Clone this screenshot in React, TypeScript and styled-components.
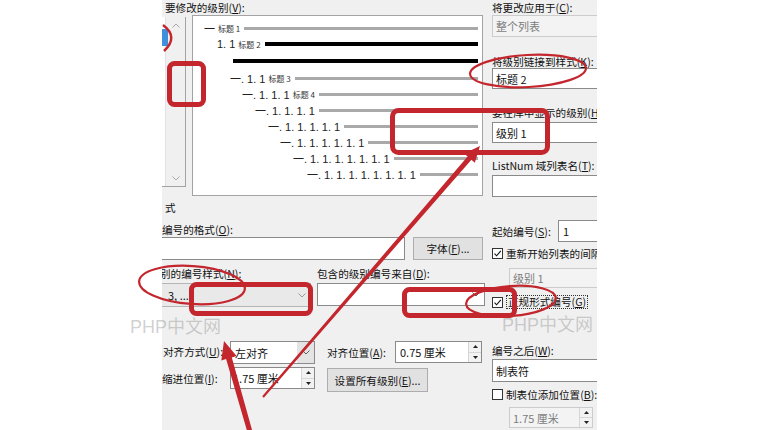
import React from 'react';
import styled, { createGlobalStyle } from 'styled-components';

const GlobalStyle = createGlobalStyle`
  html, body { margin: 0; padding: 0; background: #fff; }
  body { font-family: "Noto Sans CJK SC", "Noto Sans", sans-serif; }
`;

const RED = '#c3262d';

const Page = styled.div`
  position: relative;
  width: 760px;
  height: 430px;
  overflow: hidden;
  background: #fff;
  font-family: "Noto Sans CJK SC", "Liberation Sans", sans-serif;
  font-size: 10.6px;
  color: #111;
`;

const Dialog = styled.div`
  margin-left: 162px;
  width: 435px;
  height: 430px;
  box-sizing: border-box;
  padding-left: 3px;
  background: #f0f0f0;
  overflow: hidden;
  display: grid;
  grid-template-columns: 321px 105px;
  grid-template-rows: 200px 135px 95px;
  column-gap: 6px;
`;

const Cell = styled.div`
  display: flex;
  flex-direction: column;
  min-width: 0;
`;

const Label = styled.div<{ $mt?: number; $w?: number; $cut?: number; $ml?: number }>`
  flex: none;
  height: 13px;
  line-height: 13px;
  margin-top: ${(p) => p.$mt ?? 0}px;
  margin-left: ${(p) => p.$ml ?? 0}px;
  width: ${(p) => (p.$w ? `${p.$w}px` : 'auto')};
  text-indent: ${(p) => -(p.$cut ?? 0)}px;
  white-space: nowrap;
  u { text-decoration: underline; }
`;

const Row = styled.div<{ $mt?: number; $align?: string }>`
  display: flex;
  align-items: ${(p) => p.$align ?? 'flex-start'};
  margin-top: ${(p) => p.$mt ?? 0}px;
`;

const Col = styled.div<{ $w: number; $ml?: number }>`
  display: flex;
  flex-direction: column;
  width: ${(p) => p.$w}px;
  margin-left: ${(p) => p.$ml ?? 0}px;
`;

/* ---------- level list + preview ---------- */

const ListBox = styled.div`
  flex: none;
  display: flex;
  width: 24px;
  height: 170px;
  margin-left: -3px;
  margin-top: 2px;
  box-sizing: border-box;
  border-right: 1px solid #a3a3a3;
  border-bottom: 1px solid #a3a3a3;
`;

const ListItems = styled.div`
  width: 3px;
  background: #fff;
`;

const ScrollTrack = styled.div`
  flex: 1;
  display: flex;
  flex-direction: column;
  justify-content: space-between;
  align-items: center;
  padding: 6px 0 5px;
  background: #f0f0f0;
  border-left: 1px solid #e2e2e2;
`;

const Preview = styled.div`
  flex: none;
  width: 291px;
  height: 181px;
  margin-left: 6px;
  box-sizing: border-box;
  padding: 4px 4px 0 0;
  background: #fff;
  border: 1px solid #a3a3a3;
`;

const PreviewRow = styled.div<{ $indent: number; $h: number }>`
  display: flex;
  align-items: center;
  height: ${(p) => p.$h}px;
  padding-left: ${(p) => p.$indent}px;
`;

const Num = styled.span`
  font-family: "Liberation Sans", "Noto Sans CJK SC", sans-serif;
  font-size: 11px;
  white-space: pre;
  color: #222;
`;

const Caption = styled.span`
  font-size: 8px;
  margin-left: 3px;
  white-space: pre;
  color: #333;
`;

const Bar = styled.span<{ $dark?: boolean; $flush?: boolean }>`
  flex: 1;
  margin-left: ${(p) => (p.$flush ? 0 : 4)}px;
  height: ${(p) => (p.$dark ? 4 : 3)}px;
  background: ${(p) => (p.$dark ? '#000' : '#a9a9a9')};
`;

/* ---------- form controls ---------- */

type Tone = 'white' | 'gray' | 'disabled';

const Field = styled.div<{ $w?: number; $h: number; $mt?: number; $ml?: number; $pl?: number; $tone?: Tone }>`
  flex: none;
  display: flex;
  align-items: center;
  box-sizing: border-box;
  width: ${(p) => (p.$w ? `${p.$w}px` : 'calc(100% + 30px)')};
  height: ${(p) => p.$h}px;
  margin-top: ${(p) => p.$mt ?? 0}px;
  margin-left: ${(p) => p.$ml ?? 0}px;
  padding-left: ${(p) => p.$pl ?? 3}px;
  border: 1px solid
    ${(p) => (p.$tone === 'disabled' ? '#cccccc' : p.$tone === 'gray' ? '#b5b5b5' : '#8a8a8a')};
  background: ${(p) => (p.$tone === 'disabled' ? '#f3f3f3' : p.$tone === 'gray' ? '#e9e9e9' : '#fff')};
  color: ${(p) => (p.$tone === 'disabled' ? '#7d7d7d' : '#111')};
  font-size: 11px;
  white-space: nowrap;
  overflow: hidden;
`;

const FieldText = styled.span`
  flex: 1;
  overflow: hidden;
`;

const DropButton = styled.span<{ $shade?: boolean }>`
  flex: none;
  align-self: stretch;
  width: 17px;
  display: flex;
  align-items: center;
  justify-content: center;
  background: ${(p) => (p.$shade ? '#e4e4e4' : 'transparent')};
`;

const Spinner = styled.span`
  flex: none;
  align-self: stretch;
  width: 12px;
  display: flex;
  flex-direction: column;
  border-left: 1px solid #d6d6d6;
`;

const SpinHalf = styled.span`
  flex: 1;
  display: flex;
  align-items: center;
  justify-content: center;
  background: #f2f2f2;
  & + & { border-top: 1px solid #d6d6d6; }
`;

const PushButton = styled.div<{ $w: number; $h: number; $mt?: number; $ml?: number }>`
  flex: none;
  display: flex;
  align-items: center;
  justify-content: center;
  box-sizing: border-box;
  width: ${(p) => p.$w}px;
  height: ${(p) => p.$h}px;
  margin-top: ${(p) => p.$mt ?? 0}px;
  margin-left: ${(p) => p.$ml ?? 0}px;
  background: #e1e1e1;
  border: 1px solid #adadad;
  white-space: nowrap;
  u { text-decoration: underline; }
`;

const CheckRow = styled.div<{ $mt?: number; $h?: number }>`
  display: flex;
  align-items: center;
  gap: 3px;
  height: ${(p) => p.$h ?? 13}px;
  margin-top: ${(p) => p.$mt ?? 0}px;
  white-space: nowrap;
  u { text-decoration: underline; }
`;

const CheckBox = styled.span`
  flex: none;
  width: 11px;
  height: 11px;
  box-sizing: border-box;
  border: 1px solid #333;
  background: #fff;
  display: flex;
  align-items: center;
  justify-content: center;
`;

const FocusText = styled.span`
  border: 1px dotted #333;
  padding: 0 1px;
  line-height: 12px;
`;

/* ---------- overlays ---------- */

const Watermark = styled.div<{ $x: number; $y: number }>`
  position: absolute;
  left: ${(p) => p.$x}px;
  top: ${(p) => p.$y}px;
  font-family: "Liberation Sans", "Noto Sans CJK SC", sans-serif;
  font-size: 18px;
  line-height: 24px;
  color: rgba(150, 150, 150, 0.45);
  white-space: nowrap;
  pointer-events: none;
`;

const Overlay = styled.svg`
  position: absolute;
  left: 0;
  top: 0;
  pointer-events: none;
`;

const Chevron = ({ color = '#606060' }: { color?: string }) => (
  <svg width="8" height="5" viewBox="0 0 8 5">
    <path d="M0.5 0.5 L4 4 L7.5 0.5" fill="none" stroke={color} strokeWidth="1" />
  </svg>
);

const ChevronUp = () => (
  <svg width="8" height="5" viewBox="0 0 8 5">
    <path d="M0.5 4.5 L4 1 L7.5 4.5" fill="none" stroke="#a8a8a8" strokeWidth="1" />
  </svg>
);

const Tri = ({ up }: { up?: boolean }) => (
  <svg width="5" height="3" viewBox="0 0 5 3">
    <path d={up ? 'M0 3 L2.5 0 L5 3 Z' : 'M0 0 L2.5 3 L5 0 Z'} fill="#222" />
  </svg>
);

const Tick = () => (
  <svg width="9" height="9" viewBox="0 0 9 9">
    <path d="M1.5 4.6 L3.6 6.8 L7.8 1.8" fill="none" stroke="#111" strokeWidth="1.1" />
  </svg>
);

const Spin = () => (
  <Spinner>
    <SpinHalf><Tri up /></SpinHalf>
    <SpinHalf><Tri /></SpinHalf>
  </Spinner>
);

type Level = { num?: string; caption?: string; indent: number; h: number; dark?: boolean };

const levels: Level[] = [
  { num: '一', caption: '标题 1', indent: 11, h: 16 },
  { num: '1. 1', caption: '标题 2', indent: 24, h: 16, dark: true },
  { indent: 40, h: 18, dark: true },
  { num: '一. 1. 1', caption: '标题 3', indent: 37, h: 16 },
  { num: '一. 1. 1. 1', caption: '标题 4', indent: 49, h: 16 },
  { num: '一. 1. 1. 1. 1', indent: 62, h: 16 },
  { num: '一. 1. 1. 1. 1. 1', indent: 75, h: 16 },
  { num: '一. 1. 1. 1. 1. 1. 1', indent: 87, h: 16 },
  { num: '一. 1. 1. 1. 1. 1. 1. 1', indent: 100, h: 16 },
  { num: '一. 1. 1. 1. 1. 1. 1. 1. 1', indent: 114, h: 16 },
];

// tapered arrow polygon from tail to tip
const arrow = (tx: number, ty: number, px: number, py: number, tailW: number, bodyW: number, headL: number, headW: number) => {
  const dx = px - tx;
  const dy = py - ty;
  const len = Math.hypot(dx, dy);
  const ux = dx / len;
  const uy = dy / len;
  const nx = -uy;
  const ny = ux;
  const bx = px - ux * headL;
  const by = py - uy * headL;
  const pts = [
    [tx + nx * tailW, ty + ny * tailW],
    [bx + nx * bodyW, by + ny * bodyW],
    [bx + nx * headW, by + ny * headW],
    [px, py],
    [bx - nx * headW, by - ny * headW],
    [bx - nx * bodyW, by - ny * bodyW],
    [tx - nx * tailW, ty - ny * tailW],
  ];
  return pts.map((p) => `${p[0].toFixed(1)},${p[1].toFixed(1)}`).join(' ');
};

const Annotations = () => (
  <Overlay width="760" height="430" viewBox="0 0 760 430">
    <rect x="162" y="29" width="6" height="17" fill="#3f8fdc" />
    <path d="M163 25 Q179 37 164 51" fill="none" stroke={RED} strokeWidth="2.5" />
    <rect x="169.5" y="63.5" width="34" height="41" rx="5" fill="none" stroke={RED} strokeWidth="5" />
    <ellipse cx="528" cy="71" rx="58" ry="16" transform="rotate(-3 528 71)" fill="none" stroke={RED} strokeWidth="2.2" />
    <rect x="392.5" y="110.5" width="155" height="42" rx="6" fill="none" stroke={RED} strokeWidth="5" />
    <ellipse cx="192" cy="285" rx="53" ry="19" transform="rotate(4 192 285)" fill="none" stroke={RED} strokeWidth="2.2" />
    <rect x="191.5" y="284.5" width="119" height="29" rx="5" fill="none" stroke={RED} strokeWidth="5" />
    <rect x="404.5" y="289.5" width="110" height="26" rx="5" fill="none" stroke={RED} strokeWidth="5" />
    <ellipse cx="511" cy="301" rx="45" ry="15" transform="rotate(-4 511 301)" fill="none" stroke={RED} strokeWidth="2.2" />
    <polygon points={arrow(263, 397, 480, 146, 1, 2.5, 16, 7)} fill={RED} />
    <polygon points={arrow(250, 432, 224, 341, 2.5, 3, 18, 8)} fill={RED} />
  </Overlay>
);

const App: React.FC = () => (
  <>
    <GlobalStyle />
    <Page>
      <Dialog>
        {/* top left: levels + preview */}
        <Cell>
          <Label $mt={1}>要修改的级别(<u>V</u>):</Label>
          <Row $mt={1}>
            <ListBox>
              <ListItems />
              <ScrollTrack>
                <ChevronUp />
                <Chevron color="#a8a8a8" />
              </ScrollTrack>
            </ListBox>
            <Preview>
              {levels.map((l, i) => (
                <PreviewRow key={i} $indent={l.indent} $h={l.h}>
                  {l.num && <Num>{l.num}</Num>}
                  {l.caption && <Caption>{l.caption}</Caption>}
                  <Bar $dark={l.dark} $flush={!l.num} />
                </PreviewRow>
              ))}
            </Preview>
          </Row>
        </Cell>

        {/* top right */}
        <Cell>
          <Label $mt={1}>将更改应用于(<u>C</u>):</Label>
          <Field $mt={1} $h={22} $tone="disabled">整个列表</Field>
          <Label $mt={17.5}>将级别链接到样式(<u>K</u>):</Label>
          <Field $mt={0.5} $h={21}>标题 2</Field>
          <Label $mt={16.5}>要在库中显示的级别(<u>H</u>):</Label>
          <Field $mt={3.5} $h={21}>级别 1</Field>
          <Label $mt={15.5}>ListNum 域列表名(<u>T</u>):</Label>
          <Field $mt={3.5} $h={22} />
        </Cell>

        {/* middle left: number format */}
        <Cell>
          <Label $mt={0.5}>式</Label>
          <Label $mt={9} $cut={3}>编号的格式(<u>O</u>):</Label>
          <Row $mt={1.5}>
            <Field $w={246} $ml={-6} $h={23} />
            <PushButton $w={70} $h={23} $ml={8}>字体(<u>F</u>)...</PushButton>
          </Row>
          <Row $mt={6.5}>
            <Col $w={146}>
              <Label $cut={5}>别的编号样式(<u>N</u>):</Label>
              <Field $mt={3.5} $h={24} $w={156} $ml={-10} $pl={12} $tone="gray">
                <FieldText>3, ...</FieldText>
                <DropButton><Chevron color="#9a9a9a" /></DropButton>
              </Field>
            </Col>
            <Col $w={168} $ml={6}>
              <Label>包含的级别编号来自(<u>D</u>):</Label>
              <Field $mt={3.5} $h={23} $w={168} $tone="white">
                <FieldText />
                <DropButton><Chevron /></DropButton>
              </Field>
            </Col>
          </Row>
        </Cell>

        {/* middle right */}
        <Cell>
          <Row $mt={20} $align="center">
            <Label $w={66}>起始编号(<u>S</u>):</Label>
            <Field $w={60} $h={22} $pl={4}>1</Field>
          </Row>
          <CheckRow $mt={4.5}>
            <CheckBox><Tick /></CheckBox>
            <span>重新开始列表的间隔(<u>R</u>):</span>
          </CheckRow>
          <Field $mt={8.5} $ml={17} $h={20} $tone="disabled">级别 1</Field>
          <CheckRow $mt={7} $h={14}>
            <CheckBox><Tick /></CheckBox>
            <FocusText>正规形式编号(<u>G</u>)</FocusText>
          </CheckRow>
        </Cell>

        {/* bottom left: position */}
        <Cell>
          <Row $mt={6}>
            <Label $w={65} $mt={4} $cut={2}>对齐方式(<u>U</u>):</Label>
            <Field $w={85} $h={23} $pl={4}>
              <FieldText>左对齐</FieldText>
              <DropButton $shade><Chevron /></DropButton>
            </Field>
            <Label $w={68} $mt={5} $ml={12}>对齐位置(<u>A</u>):</Label>
            <Field $w={87} $h={22} $pl={4}>
              <FieldText>0.75 厘米</FieldText>
              <Spin />
            </Field>
          </Row>
          <Row $mt={3}>
            <Label $w={65} $mt={5} $cut={3}>缩进位置(<u>I</u>):</Label>
            <Field $w={85} $h={22} $pl={2}>
              <FieldText>1.75 厘米</FieldText>
              <Spin />
            </Field>
            <PushButton $w={101} $h={24} $mt={1} $ml={12}>设置所有级别(<u>E</u>)...</PushButton>
          </Row>
        </Cell>

        {/* bottom right */}
        <Cell>
          <Label $mt={8.5}>编号之后(<u>W</u>):</Label>
          <Field $mt={2.5} $h={23}>制表符</Field>
          <CheckRow $mt={5.5}>
            <CheckBox />
            <span>制表位添加位置(<u>B</u>):</span>
          </CheckRow>
          <Field $mt={6.5} $ml={17} $w={84} $h={21} $tone="disabled">
            <FieldText>1.75 厘米</FieldText>
            <Spin />
          </Field>
        </Cell>
      </Dialog>

      <Watermark $x={130} $y={315}>PHP中文网</Watermark>
      <Watermark $x={502} $y={313}>PHP中文网</Watermark>
      <Annotations />
    </Page>
  </>
);

export default App;
